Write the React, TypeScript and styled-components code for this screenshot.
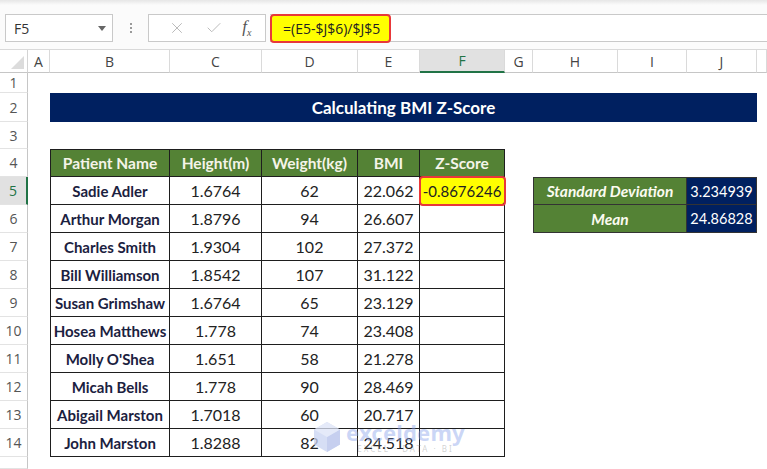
import React from 'react';
import styled, { createGlobalStyle } from 'styled-components';
import { X, Check } from 'lucide-react';

const GlobalStyle = createGlobalStyle`
  html, body {
    margin: 0;
    padding: 0;
    background: #fff;
    overflow: hidden;
  }
  * {
    box-sizing: border-box;
  }
`;

const COLUMNS = ['A', 'B', 'C', 'D', 'E', 'F', 'G', 'H', 'I', 'J'];
const ROWS = Array.from({ length: 15 }, (_, i) => i + 1);

const patients = [
  ['Sadie Adler', '1.6764', '62', '22.062'],
  ['Arthur Morgan', '1.8796', '94', '26.607'],
  ['Charles Smith', '1.9304', '102', '27.372'],
  ['Bill Williamson', '1.8542', '107', '31.122'],
  ['Susan Grimshaw', '1.6764', '65', '23.129'],
  ['Hosea Matthews', '1.778', '74', '23.408'],
  ["Molly O'Shea", '1.651', '58', '21.278'],
  ['Micah Bells', '1.778', '90', '28.469'],
  ['Abigail Marston', '1.7018', '60', '20.717'],
  ['John Marston', '1.8288', '82', '24.518'],
];

const App = () => {
  return (
    <>
      <GlobalStyle />
      <Page>
        <FormulaBar>
          <NameBox>
            <span>F5</span>
            <Caret />
          </NameBox>
          <Grip>
            <i />
            <i />
            <i />
          </Grip>
          <FxGroup>
            <X size={18} strokeWidth={1.3} color="#b9b9b9" />
            <Check size={18} strokeWidth={1.3} color="#b9b9b9" />
            <Fx>
              f<sub>x</sub>
            </Fx>
          </FxGroup>
          <FormulaField>
            <FormulaText>=(E5-$J$6)/$J$5</FormulaText>
          </FormulaField>
        </FormulaBar>

        <Sheet>
          <Corner />
          {COLUMNS.map((c) => (
            <ColHeader key={c} $active={c === 'F'}>
              {c}
            </ColHeader>
          ))}
          <ColHeader />

          {ROWS.map((r) => (
            <RowHeader key={r} $row={r + 1} $active={r === 5}>
              {r < 15 ? r : ''}
            </RowHeader>
          ))}

          <Title>Calculating BMI Z-Score</Title>

          <DataTable>
            <HeadCell>Patient Name</HeadCell>
            <HeadCell>Height(m)</HeadCell>
            <HeadCell>Weight(kg)</HeadCell>
            <HeadCell>BMI</HeadCell>
            <HeadCell>Z-Score</HeadCell>
            {patients.map((p, i) => (
              <React.Fragment key={p[0]}>
                <NameCell>{p[0]}</NameCell>
                <NumCell>{p[1]}</NumCell>
                <NumCell>{p[2]}</NumCell>
                <NumCell>{p[3]}</NumCell>
                <NumCell $highlight={i === 0}>{i === 0 ? '-0.8676246' : ''}</NumCell>
              </React.Fragment>
            ))}
          </DataTable>

          <StatsTable>
            <StatLabel>Standard Deviation</StatLabel>
            <StatValue>3.234939</StatValue>
            <StatLabel>Mean</StatLabel>
            <StatValue>24.86828</StatValue>
          </StatsTable>
        </Sheet>

        <Watermark>
          <svg width="30" height="32" viewBox="0 0 30 32">
            <path d="M15 1 L28 8.5 L28 23.5 L15 31 L2 23.5 L2 8.5 Z" fill="#c9d3f2" />
            <path d="M15 16 L28 8.5 L28 23.5 L15 31 Z" fill="#b3c0ea" />
            <path d="M15 16 L2 8.5 L15 1 L28 8.5 Z" fill="#dde4f7" />
          </svg>
          <MarkText>
            <MarkName>exceldemy</MarkName>
            <MarkSub>EXCEL · DATA · BI</MarkSub>
          </MarkText>
        </Watermark>
      </Page>
    </>
  );
};

export default App;

const Page = styled.div`
  position: relative;
  width: 767px;
  height: 469px;
  display: flex;
  flex-direction: column;
  overflow: hidden;
  font-family: 'Open Sans', 'Noto Sans', sans-serif;
`;

const FormulaBar = styled.div`
  height: 50px;
  display: flex;
  align-items: flex-start;
  padding: 14px 0 0 5px;
  background: linear-gradient(#e6e6e6 0px, #fbfbfb 5px, #fbfbfb 100%);
  border-bottom: 1px solid #d9d9d9;
`;

const NameBox = styled.div`
  width: 108px;
  height: 28px;
  border: 1px solid #c9c9c9;
  background: #fff;
  display: flex;
  align-items: center;
  justify-content: space-between;
  padding: 0 6px 0 8px;
  font-size: 14px;
  color: #333;
`;

const Caret = styled.div`
  width: 0;
  height: 0;
  border-left: 4px solid transparent;
  border-right: 4px solid transparent;
  border-top: 5px solid #666;
`;

const Grip = styled.div`
  width: 35px;
  height: 28px;
  display: flex;
  flex-direction: column;
  align-items: center;
  justify-content: center;
  gap: 2px;

  & i {
    width: 2px;
    height: 2px;
    background: #9a9a9a;
  }
`;

const FxGroup = styled.div`
  width: 118px;
  height: 28px;
  border: 1px solid #c9c9c9;
  background: #fff;
  display: flex;
  align-items: center;
  justify-content: space-around;
  padding: 0 4px 0 10px;
`;

const Fx = styled.span`
  font-family: 'Liberation Serif', serif;
  font-style: italic;
  font-size: 17px;
  color: #555;

  & sub {
    font-size: 10px;
  }
`;

const FormulaField = styled.div`
  flex: 1;
  height: 28px;
  margin-left: 4px;
  border-top: 1px solid #c9c9c9;
  border-bottom: 1px solid #c9c9c9;
  background: #fff;
  display: flex;
`;

const FormulaText = styled.div`
  width: 121px;
  height: 29px;
  margin-top: -1px;
  background: #ffff00;
  border: 2px solid #e8383a;
  border-radius: 4px;
  display: flex;
  align-items: center;
  padding-left: 11px;
  font-family: 'Open Sans', sans-serif;
  font-size: 14px;
  color: #222;
  white-space: nowrap;
`;

const Sheet = styled.div`
  flex: 1;
  display: grid;
  grid-template-columns: 28px 22px 120px 92px 96px 62px 85px 28px 85px 69px 70px 1fr;
  grid-template-rows: 23px 20px 29px 27px repeat(11, 28px) 1fr;
  background: #fff;
`;

const Corner = styled.div`
  grid-column: 1;
  grid-row: 1;
  position: relative;
  border-right: 1px solid #d4d4d4;
  border-bottom: 1px solid #c6c6c6;

  &::after {
    content: '';
    position: absolute;
    right: 3px;
    bottom: 3px;
    border-left: 13px solid transparent;
    border-bottom: 13px solid #dcdcdc;
  }
`;

const ColHeader = styled.div<{ $active?: boolean }>`
  grid-row: 1;
  display: flex;
  align-items: center;
  justify-content: center;
  font-size: 14px;
  color: ${(p) => (p.$active ? '#217346' : '#444')};
  background: ${(p) => (p.$active ? '#e1e1e1' : '#fff')};
  border-right: 1px solid #dadada;
  border-bottom: ${(p) => (p.$active ? '2px solid #217346' : '1px solid #c6c6c6')};
`;

const RowHeader = styled.div<{ $row: number; $active?: boolean }>`
  grid-column: 1;
  grid-row: ${(p) => p.$row};
  display: flex;
  align-items: center;
  justify-content: center;
  font-size: 14px;
  color: ${(p) => (p.$active ? '#217346' : '#555')};
  background: ${(p) => (p.$active ? '#e1e1e1' : '#fff')};
  border-bottom: 1px solid #e3e3e3;
  border-right: ${(p) => (p.$active ? '2px solid #217346' : '1px solid #c6c6c6')};
`;

const Title = styled.div`
  grid-column: 3 / 12;
  grid-row: 3;
  background: #002060;
  color: #fff;
  display: flex;
  align-items: center;
  justify-content: center;
  font-family: Lato, 'Liberation Sans', sans-serif;
  font-weight: 700;
  font-size: 17px;
`;

const DataTable = styled.div`
  grid-column: 3 / 8;
  grid-row: 5 / 16;
  display: grid;
  grid-template-columns: 119px 92px 96px 62px 85px;
  grid-template-rows: 27px repeat(10, 28px);
  border-left: 1px solid #1e1e1e;
  border-top: 1px solid #1e1e1e;
  font-family: Lato, 'Liberation Sans', sans-serif;
`;

const Cell = styled.div`
  display: flex;
  align-items: center;
  justify-content: center;
  border-right: 1px solid #1e1e1e;
  border-bottom: 1px solid #1e1e1e;
  white-space: nowrap;
`;

const HeadCell = styled(Cell)`
  background: #548235;
  color: #f4f4e8;
  font-weight: 700;
  font-size: 15.5px;
`;

const NameCell = styled(Cell)`
  font-weight: 700;
  font-size: 15px;
  color: #1b2140;
`;

const NumCell = styled(Cell)<{ $highlight?: boolean }>`
  font-size: ${(p) => (p.$highlight ? '15px' : '16px')};
  color: #222;
  position: relative;
  background: ${(p) => (p.$highlight ? '#ffff00' : 'transparent')};
  outline: ${(p) => (p.$highlight ? '2px solid #e8383a' : 'none')};
  outline-offset: -1px;
  border-radius: ${(p) => (p.$highlight ? '3px' : '0')};
  z-index: ${(p) => (p.$highlight ? 1 : 0)};
`;

const StatsTable = styled.div`
  grid-column: 9 / 12;
  grid-row: 6 / 8;
  display: grid;
  grid-template-columns: 153px 70px;
  grid-template-rows: 27px 28px;
  border-left: 1px solid #333;
  border-top: 1px solid #333;
  font-family: Lato, 'Liberation Sans', sans-serif;
`;

const StatLabel = styled(Cell)`
  background: #548235;
  color: #fbfbf0;
  font-weight: 700;
  font-style: italic;
  font-size: 15.5px;
  border-color: #333;
`;

const StatValue = styled(Cell)`
  background: #002060;
  color: #fff;
  font-size: 14.5px;
  border-color: #333;
`;

const Watermark = styled.div`
  position: absolute;
  left: 312px;
  top: 421px;
  display: flex;
  align-items: center;
  gap: 4px;
  opacity: 0.75;
  pointer-events: none;
`;

const MarkText = styled.div`
  display: flex;
  flex-direction: column;
  align-items: center;
  line-height: 1;
`;

const MarkName = styled.span`
  font-family: 'Noto Sans', sans-serif;
  font-weight: 700;
  font-size: 22px;
  color: rgba(140, 165, 235, 0.6);
  letter-spacing: 0.2px;
`;

const MarkSub = styled.span`
  margin-top: 2px;
  font-family: 'Noto Sans', sans-serif;
  font-size: 8px;
  letter-spacing: 2px;
  color: rgba(120, 120, 120, 0.45);
`;
